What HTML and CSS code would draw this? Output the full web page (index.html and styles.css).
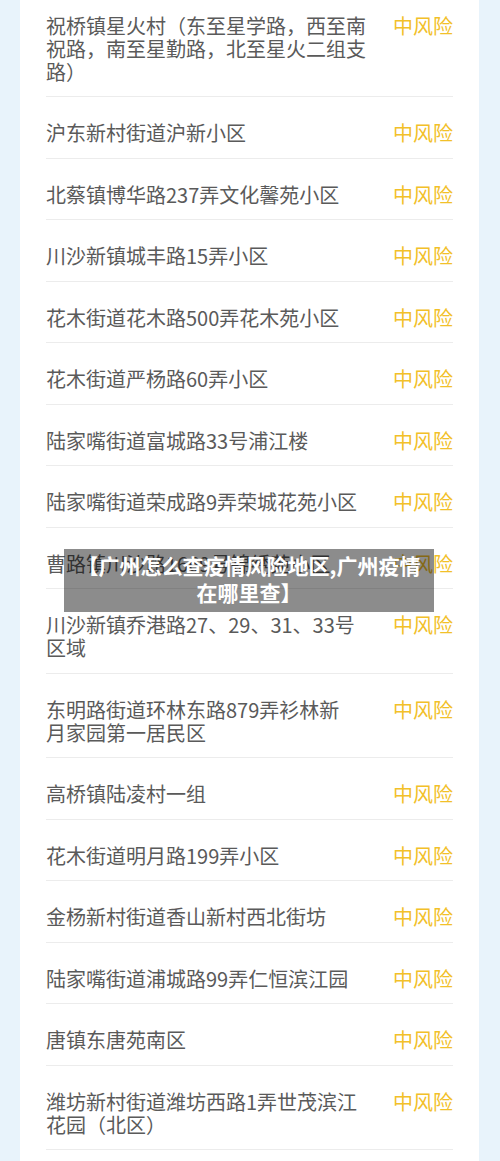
FILE: index.html
```html
<!DOCTYPE html>
<html lang="zh-CN">
<head>
    <meta charset="UTF-8">
    <meta name="viewport" content="width=device-width, initial-scale=1.0">
    <title>中风险地区</title>
    <link rel="stylesheet" href="styles.css">
</head>
<body>

<div class="card">
    <div class="row"><div class="name">祝桥镇星火村（东至星学路，西至南祝路，南至星勤路，北至星火二组支路）</div><div class="risk">中风险</div></div>
    <div class="row"><div class="name">沪东新村街道沪新小区</div><div class="risk">中风险</div></div>
    <div class="row"><div class="name">北蔡镇博华路237弄文化馨苑小区</div><div class="risk">中风险</div></div>
    <div class="row"><div class="name">川沙新镇城丰路15弄小区</div><div class="risk">中风险</div></div>
    <div class="row"><div class="name">花木街道花木路500弄花木苑小区</div><div class="risk">中风险</div></div>
    <div class="row"><div class="name">花木街道严杨路60弄小区</div><div class="risk">中风险</div></div>
    <div class="row"><div class="name">陆家嘴街道富城路33号浦江楼</div><div class="risk">中风险</div></div>
    <div class="row"><div class="name">陆家嘴街道荣成路9弄荣城花苑小区</div><div class="risk">中风险</div></div>
    <div class="row"><div class="name">曹路镇川沙路1669号锦绣苑小区</div><div class="risk">中风险</div></div>
    <div class="row"><div class="name">川沙新镇乔港路27、29、31、33号区域</div><div class="risk">中风险</div></div>
    <div class="row"><div class="name">东明路街道环林东路879弄衫林新<br>月家园第一居民区</div><div class="risk">中风险</div></div>
    <div class="row"><div class="name">高桥镇陆凌村一组</div><div class="risk">中风险</div></div>
    <div class="row"><div class="name">花木街道明月路199弄小区</div><div class="risk">中风险</div></div>
    <div class="row"><div class="name">金杨新村街道香山新村西北街坊</div><div class="risk">中风险</div></div>
    <div class="row"><div class="name">陆家嘴街道浦城路99弄仁恒滨江园</div><div class="risk">中风险</div></div>
    <div class="row"><div class="name">唐镇东唐苑南区</div><div class="risk">中风险</div></div>
    <div class="row"><div class="name">潍坊新村街道潍坊西路1弄世茂滨江花园（北区）</div><div class="risk">中风险</div></div>
</div>

<div class="caption">【广州怎么查疫情风险地区,广州疫情在哪里查】</div>

</body>
</html>
```

FILE: styles.css
```css
html, body {
    height: 100%;
}
body {
    margin: 0;
    background-color: #e8f3fb;
    font-family: "Noto Sans CJK SC", "Noto Sans", sans-serif;
    position: relative;
    overflow: hidden;
}
.card {
    background-color: #fff;
    margin: -10.5px 21px 0 20px;
    padding: 0 26px 40px;
}
.row {
    display: flex;
    justify-content: space-between;
    align-items: flex-start;
    padding: 24px 0 13.5px;
    border-bottom: 1px solid #ececec;
    font-size: 20px;
    line-height: 23px;
}
.name {
    width: 322px;
    color: #5a5a5a;
}
.risk {
    color: #f2c029;
}
.caption {
    position: absolute;
    top: 549px;
    left: 64px;
    width: 370px;
    height: 63px;
    box-sizing: border-box;
    padding: 3px 12px 0;
    background-color: rgba(0, 0, 0, 0.45);
    color: #fff;
    font-size: 21px;
    font-weight: bold;
    line-height: 27px;
    text-align: center;
}
```
